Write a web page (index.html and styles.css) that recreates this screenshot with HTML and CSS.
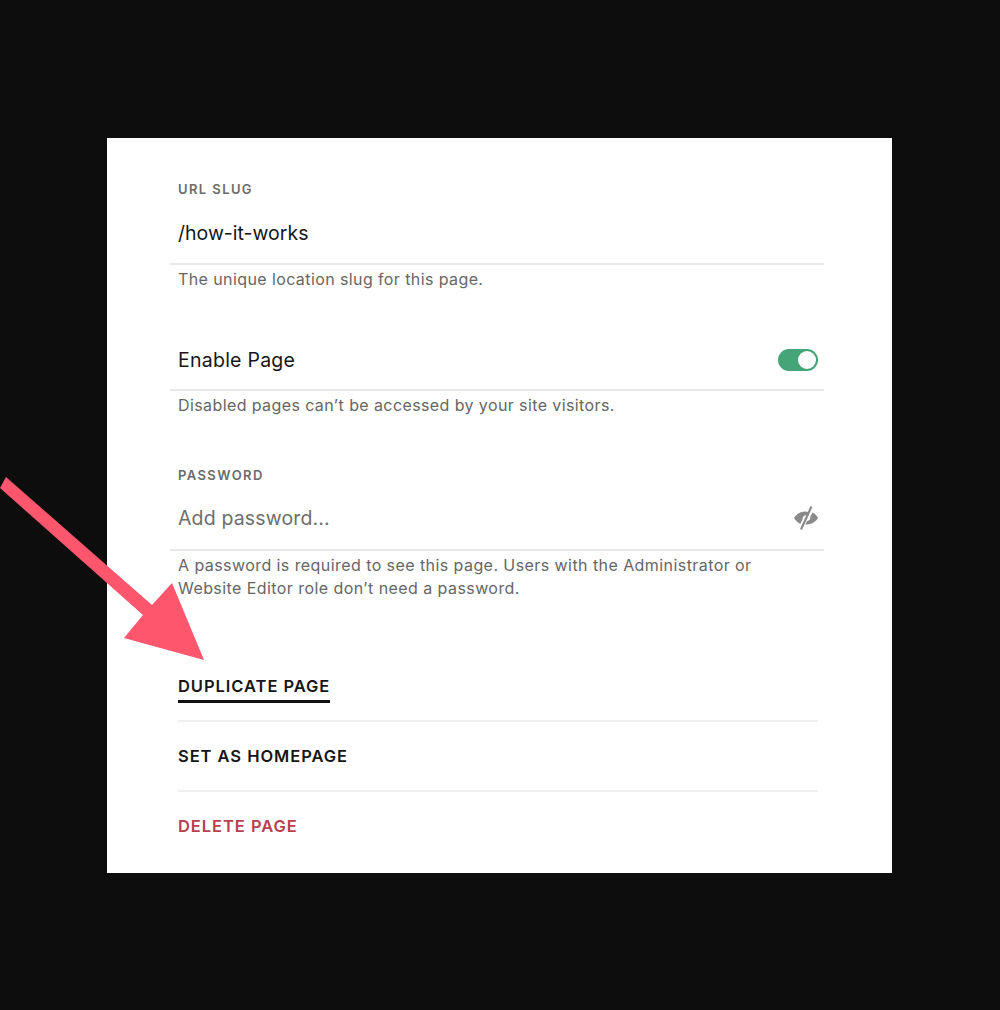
FILE: index.html
```html
<!DOCTYPE html>
<html lang="en">
<head>
  <meta charset="UTF-8">
  <title>Page settings</title>
  <link rel="stylesheet" href="styles.css">
</head>
<body>
  <!-- Settings card -->
  <main class="card">
    <section class="field slug-field">
      <div class="label">URL SLUG</div>
      <div class="input-row slug-row">
        <span class="value">/how-it-works</span>
      </div>
      <p class="help">The unique location slug for this page.</p>
    </section>

    <section class="field enable-field">
      <div class="input-row enable-row">
        <span class="value enable-text">Enable Page</span>
        <span class="toggle"><span class="knob"></span></span>
      </div>
      <p class="help">Disabled pages can’t be accessed by your site visitors.</p>
    </section>

    <section class="field password-field">
      <div class="label">PASSWORD</div>
      <div class="input-row password-row">
        <span class="value placeholder">Add password...</span>
        <svg class="eye" width="26" height="26" viewBox="0 0 26 26">
          <path d="M1 13C3 9.500 7 6.500 12 6.500c1.200 0 2.300.2 3.400.5l-1.800 3.400a3.400 3.400 0 0 0-4 4.200l-2.300 4.400C4.800 17.600 2.500 15.500 1 13z" fill="#8a8a8a"/>
          <path d="M25 13c-1.700 3-5.500 6.300-11 6.500l-1.700-.1 1.900-3.400a3.400 3.400 0 0 0 3-4.300l2.300-4.300c2.700 1.200 4.500 3.400 5.500 5.600z" fill="#8a8a8a"/>
          <path d="M18.500 1.500L8 24.500" stroke="#8a8a8a" stroke-width="2.200" fill="none"/>
        </svg>
      </div>
      <p class="help password-help">A password is required to see this page. Users with the Administrator or<br>Website Editor role don’t need a password.</p>
    </section>

    <nav class="actions">
      <div class="action"><a class="action-link current">DUPLICATE PAGE</a></div>
      <div class="action"><a class="action-link">SET AS HOMEPAGE</a></div>
      <div class="action"><a class="action-link danger">DELETE PAGE</a></div>
    </nav>
  </main>

  <!-- Arrow over the card -->
  <svg class="arrow" width="210" height="190" viewBox="0 0 210 190">
    <path d="M6 0L152 128L172 106L204 183L124 161L143 138L0 11Z" fill="#fd566d"/>
  </svg>
</body>
</html>
```

FILE: styles.css
```css
* {
  margin: 0;
  padding: 0;
  box-sizing: border-box;
}

body {
  width: 1000px;
  height: 1010px;
  padding: 138px 108px 0 107px;
  background: #0d0d0d;
  font-family: Inter, "Liberation Sans", sans-serif;
  position: relative;
  overflow: hidden;
}

/* Card */
.card {
  width: 785px;
  height: 735px;
  background: #fff;
  padding: 0 68px 0 63px;
}

.field {
  display: flex;
  flex-direction: column;
}

.slug-field {
  padding-top: 43px;
  height: 175px;
}

.enable-field {
  height: 140px;
}

.password-field {
  height: 199px;
  padding-top: 14px;
}

.label {
  height: 17px;
  padding-left: 8px;
  font-size: 13px;
  line-height: 17px;
  font-weight: 600;
  letter-spacing: 1.4px;
  color: #6b6b6b;
}

.input-row {
  display: flex;
  align-items: center;
  justify-content: space-between;
  padding-left: 8px;
  border-bottom: 2px solid #e8e8e8;
}

.slug-row {
  height: 67px;
  padding-top: 4px;
}

.enable-row {
  height: 78px;
  padding-top: 18px;
  padding-right: 6px;
}

.password-row {
  height: 67px;
  padding-top: 3px;
  padding-right: 5px;
}

.value {
  font-size: 19.5px;
  color: #161616;
}

.enable-text {
  letter-spacing: 0.25px;
}

.placeholder {
  letter-spacing: 0.15px;
  color: #6e6e6e;
}

.help {
  padding-left: 8px;
  margin-top: 3px;
  font-size: 16px;
  line-height: 23px;
  letter-spacing: 0.4px;
  color: #666;
}

.password-help {
  letter-spacing: 0.43px;
}

/* Toggle */
.toggle {
  display: flex;
  justify-content: flex-end;
  align-items: center;
  width: 40px;
  height: 22px;
  padding-right: 2px;
  border-radius: 11px;
  background: #45a578;
}

.knob {
  width: 18px;
  height: 18px;
  border-radius: 50%;
  background: #fff;
}

/* Actions */
.actions {
  margin-left: 8px;
  margin-right: 6px;
}

.action {
  height: 70px;
  padding-top: 22px;
  border-bottom: 2px solid #efefef;
}

.action:last-child {
  border-bottom: 0;
}

.action-link {
  display: inline-block;
  font-size: 16.5px;
  line-height: 24px;
  font-weight: 600;
  letter-spacing: 0.95px;
  color: #161616;
}

.current {
  height: 29px;
  border-bottom: 3px solid #111;
}

.danger {
  color: #b8404f;
}

/* Arrow */
.arrow {
  position: absolute;
  left: 0;
  top: 477px;
}
```
